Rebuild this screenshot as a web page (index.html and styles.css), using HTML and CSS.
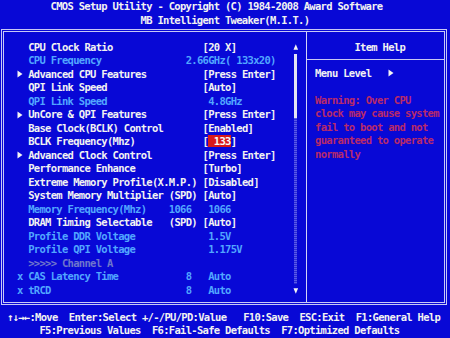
FILE: index.html
```html
<!DOCTYPE html>
<html>
<head>
    <title>CMOS Setup Utility</title>
    <link rel="stylesheet" href="styles.css">
</head>
<body>
    <div class="screen">
        <div class="title">
            <div class="line t1">CMOS Setup Utility - Copyright (C) 1984-2008 Award Software</div>
            <div class="line t2">MB Intelligent Tweaker(M.I.T.)</div>
        </div>

        <div class="frame">
            <div class="menu">
                <div class="row"><span class="mark"></span><span class="c31">CPU Clock Ratio</span><span>[20 X]</span></div>
                <div class="row dim"><span class="mark"></span><span class="c28">CPU Frequency</span><span>2.66GHz( 133x20)</span></div>
                <div class="row"><span class="mark"><svg width="6" height="8" viewBox="0 0 6 8"><polygon points="0.5,0.5 5.5,4 0.5,7.5" fill="#f4f4f4"/></svg></span><span class="c31">Advanced CPU Features</span><span>[Press Enter]</span></div>
                <div class="row"><span class="mark"></span><span class="c31">QPI Link Speed</span><span>[Auto]</span></div>
                <div class="row dim"><span class="mark"></span><span class="c32">QPI Link Speed</span><span>4.8GHz</span></div>
                <div class="row"><span class="mark"><svg width="6" height="8" viewBox="0 0 6 8"><polygon points="0.5,0.5 5.5,4 0.5,7.5" fill="#f4f4f4"/></svg></span><span class="c31">UnCore &amp; QPI Features</span><span>[Press Enter]</span></div>
                <div class="row"><span class="mark"></span><span class="c31">Base Clock(BCLK) Control</span><span>[Enabled]</span></div>
                <div class="row"><span class="mark"></span><span class="c31">BCLK Frequency(Mhz)</span><span>[<span class="hl"> 133</span>]</span></div>
                <div class="row"><span class="mark"><svg width="6" height="8" viewBox="0 0 6 8"><polygon points="0.5,0.5 5.5,4 0.5,7.5" fill="#f4f4f4"/></svg></span><span class="c31">Advanced Clock Control</span><span>[Press Enter]</span></div>
                <div class="row"><span class="mark"></span><span class="c31">Performance Enhance</span><span>[Turbo]</span></div>
                <div class="row"><span class="mark"></span><span class="c31">Extreme Memory Profile(X.M.P.)</span><span>[Disabled]</span></div>
                <div class="row"><span class="mark"></span><span class="c31">System Memory Multiplier (SPD)</span><span>[Auto]</span></div>
                <div class="row dim"><span class="mark"></span><span class="c25">Memory Frequency(Mhz)</span><span class="c7">1066</span><span>1066</span></div>
                <div class="row"><span class="mark"></span><span class="c25">DRAM Timing Selectable</span><span>(SPD) [Auto]</span></div>
                <div class="row dim"><span class="mark"></span><span class="c32">Profile DDR Voltage</span><span>1.5V</span></div>
                <div class="row dim"><span class="mark"></span><span class="c32">Profile QPI Voltage</span><span>1.175V</span></div>
                <div class="row faint"><span class="mark"></span><span>&gt;&gt;&gt;&gt;&gt; Channel A</span></div>
                <div class="row dim"><span class="mark">x</span><span class="c28">CAS Latency Time</span><span class="c4">8</span><span>Auto</span></div>
                <div class="row dim"><span class="mark">x</span><span class="c28">tRCD</span><span class="c4">8</span><span>Auto</span></div>
            </div>

            <div class="scroll">
                <div class="arrow"><svg width="6" height="8" viewBox="0 0 6 8"><polygon points="3,1 5.5,7 0.5,7" fill="#f4f4f4"/></svg></div>
                <div class="track"><div class="thumb"></div></div>
                <div class="arrow"><svg width="6" height="8" viewBox="0 0 6 8"><polygon points="0.5,1 5.5,1 3,7" fill="#f4f4f4"/></svg></div>
            </div>

            <div class="help">
                <div class="help-head"><span class="line">Item Help</span></div>
                <div class="help-body">
                    <div class="line">Menu Level<span class="gap"></span><svg width="6" height="8" viewBox="0 0 6 8"><polygon points="0.5,0.5 5.5,4 0.5,7.5" fill="#f4f4f4"/></svg></div>
                    <div class="line"></div>
                    <div class="line warn">Warning: Over CPU</div>
                    <div class="line warn">clock may cause system</div>
                    <div class="line warn">fail to boot and not</div>
                    <div class="line warn">guaranteed to operate</div>
                    <div class="line warn">normally</div>
                </div>
            </div>
        </div>

        <div class="keys">
            <div class="line k1">↑↓→←:Move  Enter:Select +/-/PU/PD:Value   F10:Save  ESC:Exit  F1:General Help</div>
            <div class="line k2">F5:Previous Values  F6:Fail-Safe Defaults  F7:Optimized Defaults</div>
        </div>
    </div>
</body>
</html>
```

FILE: styles.css
```css
body {
    margin: 0;
    background: #0808d6;
    color: #f2f2f2;
    font-family: "DejaVu Sans Mono", "Liberation Mono", monospace;
    font-weight: bold;
    font-size: 10.5px;
    letter-spacing: -0.697px;
}
.screen {
    width: 450px;
    height: 338px;
    overflow: hidden;
}
.line {
    display: block;
    height: 13.53px;
    line-height: 13.53px;
    white-space: pre;
}
.title .t1 { padding-left: 50.6px; }
.title .t2 { padding-left: 140.6px; }

/* main double frame */
.frame {
    display: flex;
    margin: 1.94px 0 0 1px;
    width: 446px;
    height: 276px;
    box-sizing: border-box;
    border: 3px double #c8c8f6;
}
.menu {
    width: 288.5px;
    padding: 8.6px 0 0 12.9px;
    box-sizing: border-box;
}
.row {
    display: flex;
    height: 13.53px;
    line-height: 13.53px;
    white-space: pre;
}
.mark {
    display: flex;
    align-items: center;
    width: 11.25px;
    flex: none;
}
.c4 { width: 22.5px; }
.c7 { width: 39.375px; }
.c25 { width: 140.625px; }
.c28 { width: 157.5px; }
.c31 { width: 174.375px; }
.c32 { width: 180px; }
.dim { color: #52a6ff; }
.faint { color: #6e76cc; }
.hl {
    background: #d81a1a;
    color: #fafafa;
}

/* scrollbar */
.scroll {
    display: flex;
    flex-direction: column;
    width: 5.625px;
    margin-right: 7.9px;
    padding-top: 8.6px;
}
.arrow {
    display: flex;
    align-items: center;
    justify-content: center;
    height: 13.53px;
}
.track {
    height: 230px;
    margin: 0 1px;
    background: repeating-linear-gradient(#5a5ae6 0 1px, #2a2ad8 1px 2px);
}
.thumb {
    height: 64px;
    background: #e4e4f4;
}

/* item help panel */
.help {
    flex: 1;
    border-left: 1px solid #d4d4f6;
}
.help-head {
    height: 28px;
    padding: 8.6px 0 0 47.4px;
    box-sizing: border-box;
    border-bottom: 1px solid #c8c8f4;
}
.help-body {
    padding: 6.7px 0 0 8px;
}
.help-body .gap {
    display: inline-block;
    width: 16.875px;
}
.warn { color: #b82a6a; }

/* key legend */
.keys {
    margin-top: 5.6px;
}
.keys .k1 { padding-left: 7px; }
.keys .k2 { padding-left: 39.4px; }
```
